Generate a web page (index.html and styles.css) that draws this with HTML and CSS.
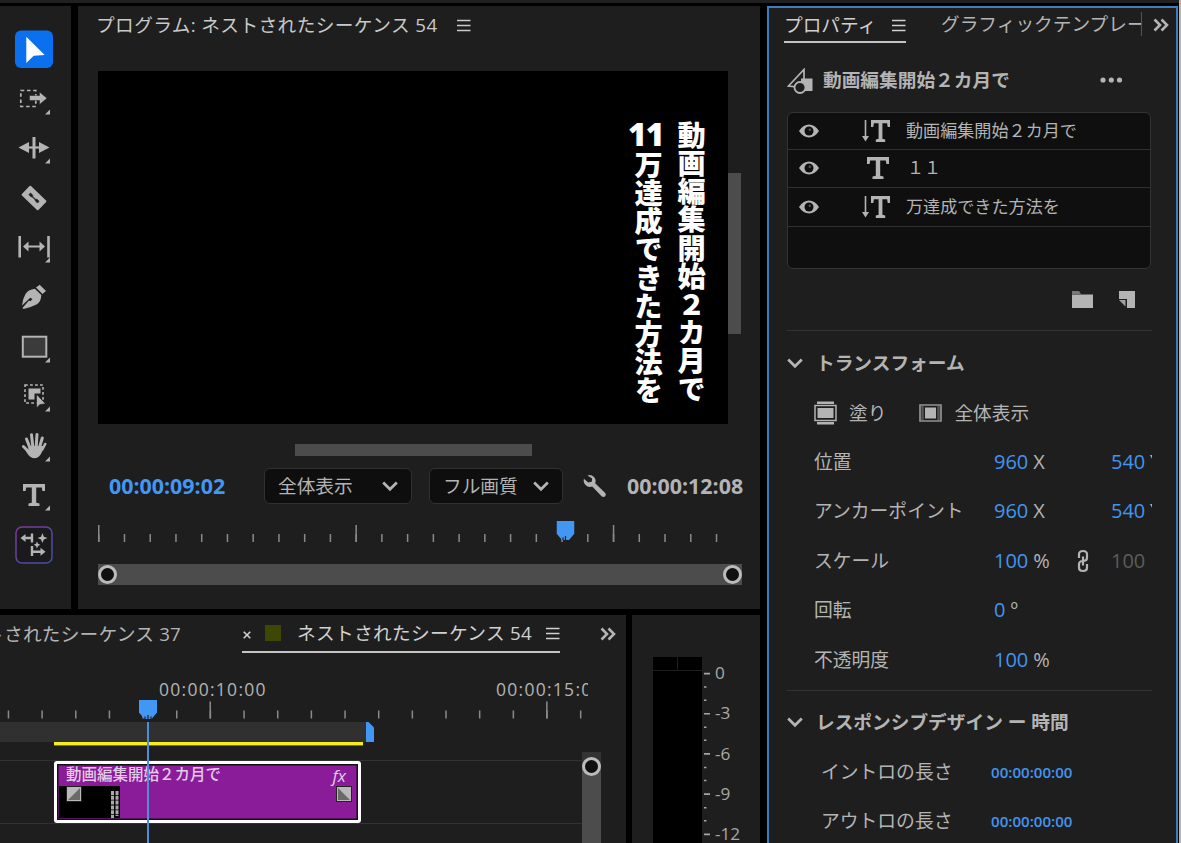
FILE: index.html
```
<!DOCTYPE html>
<html lang="ja">
<head>
    <meta charset="UTF-8">
    <meta name="viewport" content="width=device-width, initial-scale=1.0">
    <title>ネストされたシーケンス 54</title>
    <link rel="stylesheet" href="styles.css">
</head>
<body>
    <!-- Shared icons -->
    <svg class="defs" width="0" height="0">
        <symbol id="menu" viewBox="0 0 14 14"><path d="M0 2.500h13.500M0 7.500h13.500M0 12.500h13.500" stroke="currentColor" stroke-width="1.500"/></symbol>
        <symbol id="more" viewBox="0 0 16 14"><path d="M1.500 1.500 7 7l-5.500 5.500M8.500 1.500 14 7l-5.500 5.500" fill="none" stroke="currentColor" stroke-width="2.600"/></symbol>
        <symbol id="chevron" viewBox="0 0 16 12"><path d="M1.200 2.500 8 9.300l6.800-6.800" fill="none" stroke="currentColor" stroke-width="2.700"/></symbol>
        <symbol id="eye" viewBox="0 0 20 14"><path d="M0 7C3 2.500 6.500.5 10 .5S17 2.500 20 7c-3 4.500-6.500 6.500-10 6.500S3 11.500 0 7z" fill="currentColor"/><circle cx="10" cy="7" r="4.500" fill="#0f0f0f"/><circle cx="10.800" cy="5.800" r="1.200" fill="#555"/></symbol>
        <symbol id="type" viewBox="0 0 22 22"><path d="M0 0h22v7h-2.600l-.6-3.600h-5.600v15.400l3.300.7V22h-11v-2.500l3.300-.7V3.400H3.200L2.600 7H0z" fill="currentColor"/></symbol>
        <symbol id="vtype" viewBox="0 0 28 22"><path d="M3.500 0v17" stroke="currentColor" stroke-width="1.600"/><path d="M0 16h7l-3.500 5.500z" fill="currentColor"/><path d="M9 0h19v7h-2.300l-.6-3.800h-4.700v15.600l2.800.7V22h-9.400v-2.500l2.800-.7V3.200h-4.700L11.300 7H9z" fill="currentColor"/></symbol>
        <symbol id="corner" viewBox="-20 -20 40 40"><path d="M16 10.500v5h-5z" fill="currentColor"/></symbol>
        <symbol id="playhead" viewBox="0 0 18 19"><path d="M0 0h18v12.500L12.500 19h-7L0 12.500z" fill="#4297f5"/></symbol>
    </svg>

    <div class="top-strip"></div>
    <div class="workspace">
        <div class="left-side">
            <div class="upper">
                <!-- Tools -->
                <aside class="panel tools">
                    <svg class="tool" viewBox="-20 -20 40 40"><rect x="-19" y="-18.500" width="38" height="37.500" rx="6" fill="#0a70ee"/><path d="M-7.700-12.200V14l7.400-7.300 11-.7z" fill="#fff"/></svg>
                    <svg class="tool" viewBox="-20 -20 40 40"><rect x="-13.200" y="-8.500" width="15" height="16" fill="none" stroke="currentColor" stroke-width="1.700" stroke-dasharray="3.500 2.700"/><path d="M-4.500-3.500v5H5.500v4L13-.8 5.500-7v3.500z" fill="currentColor" stroke="#1e1e1e" stroke-width=".5"/><use href="#corner" x="-20" y="-20" width="40" height="40"/></svg>
                    <svg class="tool" viewBox="-20 -20 40 40"><path d="M-1.500-11h3v21.500h-3zM-15.500-.5-5-6V5zM15.500-.5 5-6V5z" fill="currentColor"/><path d="M-6-.5H6" stroke="currentColor" stroke-width="2.200"/><use href="#corner" x="-20" y="-20" width="40" height="40"/></svg>
                    <svg class="tool" viewBox="-20 -20 40 40"><g transform="rotate(44)"><rect x="-11.500" y="-6.500" width="23" height="13" rx="1" fill="currentColor"/><path d="M-6-1.200h3l1 1h4l1-1h3v2.400H3L2 .5h-4l-1 .7h-3z" fill="#1e1e1e" stroke="#1e1e1e" stroke-width=".6"/></g></svg>
                    <svg class="tool" viewBox="-20 -20 40 40"><path d="M-14.300-11v21.500M14.500-11v21.500" stroke="currentColor" stroke-width="2.600"/><path d="M-8-.5H8" stroke="currentColor" stroke-width="2"/><path d="M-11-.5l5.500-5v10zM11-.5l-5.500-5v10z" fill="currentColor"/><use href="#corner" x="-20" y="-20" width="40" height="40"/></svg>
                    <svg class="tool" viewBox="-20 -20 40 40"><path d="M5.700-12.300 12-6 8.500-3 2-9.500zM.8-8.300 7.300-2Q7.300 4.500 2.500 7.500-3 10.300-10.500 12l-1-1 6.500-7.500 1.500.8 2-2.300-2.300-1.200L-12 8.500Q-11.500 2-8.500-3-6-7.300.8-8.300z" fill="currentColor"/></svg>
                    <svg class="tool" viewBox="-20 -20 40 40"><rect x="-11.200" y="-10.300" width="23.500" height="20" fill="#3b3b3b" stroke="currentColor" stroke-width="2"/><use href="#corner" x="-20" y="-20" width="40" height="40"/></svg>
                    <svg class="tool" viewBox="-20 -20 40 40"><rect x="-9" y="-11" width="18" height="18" fill="none" stroke="currentColor" stroke-width="1.600" stroke-dasharray="2.800 2.200"/><path d="M-5.500-7.500h12v5h-6v6h-6z" fill="currentColor"/><path d="M2.500-1.800v13.800l3.200-3.300 5.800-1z" fill="currentColor" stroke="#1e1e1e" stroke-width=".7"/><use href="#corner" x="-20" y="-20" width="40" height="40"/></svg>
                    <svg class="tool" viewBox="-20 -20 40 40"><path d="M-7.500-7-4 2M-2.500-11.300-1.200 1M3-11.500 2.200 1M8.300-8 5 3M-10.600.5-5 6" stroke="currentColor" stroke-width="3" stroke-linecap="round"/><path d="M-5.500 0H6.800L10 0l-2.500 7Q5 12.300 0 12.300-4 12-7 7l-2-3.500 3.500 1z" fill="currentColor"/><path d="m8 4 3.200-6" stroke="currentColor" stroke-width="2.600" stroke-linecap="round"/><use href="#corner" x="-20" y="-20" width="40" height="40"/></svg>
                    <svg class="tool" viewBox="-20 -20 40 40"><use href="#type" x="-11" y="-11" width="22" height="22"/><use href="#corner" x="-20" y="-20" width="40" height="40"/></svg>
                    <svg class="tool" viewBox="-20 -20 40 40">
                        <linearGradient id="ring" x1="0" y1="0" x2="1" y2="1"><stop offset="0" stop-color="#813797"/><stop offset="1" stop-color="#3b53a8"/></linearGradient>
                        <rect x="-18" y="-18" width="36" height="36" rx="6" fill="#1a1a1c" stroke="url(#ring)" stroke-width="1.500"/>
                        <path d="M-2-11.500v9M-2 1v10M-10-7h8M-2 6.800H8" stroke="currentColor" stroke-width="2.400"/><path d="m-13.500-7 5-4v8zM11.500 6.800l-5-4v8zM8.500-12l1.300 3.700L13.500-7 9.800-5.500 8.500-2 7-5.500 3.500-7 7-8.300zM3-3.500l1 2.300 2.300 1L4 1 3 3.500 2 1-.3-.2l2.300-1z" fill="currentColor"/>
                    </svg>
                </aside>

                <!-- Program monitor -->
                <main class="panel program">
                    <div class="program-title"><span>プログラム: ネストされたシーケンス 54</span><svg class="menu-icon"><use href="#menu"/></svg></div>
                    <div class="monitor">
                        <div class="video">
                            <span class="caption caption-right">動画編集開始２カ月で</span>
                            <span class="caption-number">11</span>
                            <span class="caption caption-left">万達成できた方法を</span>
                        </div>
                        <div class="v-scroll"></div>
                    </div>
                    <div class="h-scroll"></div>
                    <div class="controls">
                        <span class="timecode current">00:00:09:02</span>
                        <div class="select select-fit">全体表示<svg class="chevron"><use href="#chevron"/></svg></div>
                        <div class="select select-quality">フル画質<svg class="chevron"><use href="#chevron"/></svg></div>
                        <svg class="wrench" viewBox="0 0 24 24"><path d="M4.500 1.500Q8 0 11 3q2.500 3 1.200 6.200l10 9.800q1.300 1.800 0 3.200t-3.300.3L9.200 12.500Q5.500 13.800 2.500 11 0 8.300.9 4.800l4.300 3.700 3.500-.7.500-3.300z" fill="currentColor"/></svg>
                        <span class="timecode">00:00:12:08</span>
                    </div>
                    <div class="scrub">
                        <svg width="643" height="22"><path d="M0 17h630" stroke="#8a8a8a" stroke-width="8" stroke-dasharray="1.500 24.240"/><path d="M0 12.500h530" stroke="#8a8a8a" stroke-width="17" stroke-dasharray="1.500 255.900"/><use href="#playhead" x="458.500" y="0" width="18" height="19"/><path d="M465 19v-2.500M467.500 19v-4" stroke="#1e1e1e" stroke-width="1.200"/></svg>
                    </div>
                    <div class="zoom-bar"><i class="knob"></i><i class="knob"></i></div>
                </main>
            </div>

            <div class="lower">
                <!-- Timeline -->
                <section class="panel timeline">
                    <div class="seq-tabs">
                        <div class="seq-tab-off"><span>ネストされたシーケンス 37</span></div>
                        <div class="seq-tab">
                            <svg class="close" viewBox="0 0 8 8"><path d="m.7.7 6.600 6.600m0-6.600L.7 7.300" stroke="currentColor" stroke-width="1.600"/></svg>
                            <i class="label-color"></i>
                            <span>ネストされたシーケンス 54</span>
                            <svg class="menu-icon"><use href="#menu"/></svg>
                        </div>
                        <svg class="more"><use href="#more"/></svg>
                    </div>
                    <div class="ruler">
                        <div class="ruler-labels"><span>00:00:10:00</span><span>00:00:15:00</span></div>
                        <svg width="588" height="20"><path d="M7.700 13.500H588" stroke="#8a8a8a" stroke-width="8" stroke-dasharray="1.500 32.160"/><path d="M209.500 9H588" stroke="#8a8a8a" stroke-width="17" stroke-dasharray="1.500 335.100"/></svg>
                    </div>
                    <div class="work-area"><svg width="8" height="20"><path d="M0 0h2.500L8 5.500V20H0z" fill="#4297f5"/></svg></div>
                    <div class="render-bar"></div>
                    <div class="track">
                        <div class="clip">
                            <div class="clip-name"><span>動画編集開始２カ月で</span><em>fx</em></div>
                            <div class="thumb"><svg width="62" height="32"><path d="M53.500 5v27M58 5v25" stroke="#aaa" stroke-width="3" stroke-dasharray="4 .8"/></svg></div>
                            <svg class="fade fade-in" viewBox="0 0 14 14"><path d="M0 0h14v14H0z" fill="#b9b9b9"/><path d="M13 1v12H1z" fill="#696969"/></svg>
                            <svg class="fade fade-out" viewBox="0 0 14 14"><path d="M0 0h14v14H0z" fill="#b9b9b9"/><path d="M1 1v12h12z" fill="#696969"/></svg>
                        </div>
                    </div>
                    <div class="cursor"><svg width="18" height="19"><use href="#playhead"/><path d="M6 19v-2.500M9 19v-4M12 19v-2.500" stroke="#1e1e1e" stroke-width="1.200"/></svg></div>
                    <div class="track-scroll"><i class="knob"></i></div>
                </section>

                <!-- Audio meter -->
                <section class="panel meter">
                    <div class="bars"><i></i><i></i><i class="level"></i></div>
                    <svg class="scale" width="8" height="200"><path d="M4 15.700v180" stroke="#a5a5a5" stroke-width="6" stroke-dasharray="1.700 38.500"/><path d="M2.200 29.300v160" stroke="#a5a5a5" stroke-width="2.500" stroke-dasharray="1.500 11.600 1.500 25.600"/></svg>
                    <div class="db"><span>0</span><span>-3</span><span>-6</span><span>-9</span><span>-12</span></div>
                </section>
            </div>
        </div>

        <!-- Properties -->
        <aside class="panel properties">
            <div class="prop-tabs">
                <div class="prop-tab"><span>プロパティ</span><svg class="menu-icon"><use href="#menu"/></svg></div>
                <div class="prop-tab-off">グラフィックテンプレート</div>
                <svg class="more"><use href="#more"/></svg>
            </div>
            <div class="item-title">
                <svg class="shape-icon" width="26" height="27" viewBox="0 0 26 27"><path d="M1.500 18 17 1.500v18z" fill="none" stroke="currentColor" stroke-width="1.700"/><path d="M14 10.500h11.500V23H14z" fill="currentColor"/><circle cx="13" cy="19.500" r="5.500" fill="#1e1e1e" stroke="currentColor" stroke-width="1.800"/></svg>
                <h2>動画編集開始２カ月で</h2>
                <svg class="dots" width="24" height="6"><circle cx="3" cy="3" r="2.600" fill="currentColor"/><circle cx="11.300" cy="3" r="2.600" fill="currentColor"/><circle cx="19.500" cy="3" r="2.600" fill="currentColor"/></svg>
            </div>
            <div class="layers">
                <div class="layer"><svg class="eye"><use href="#eye"/></svg><svg class="vtype"><use href="#vtype"/></svg><span>動画編集開始２カ月で</span></div>
                <div class="layer"><svg class="eye"><use href="#eye"/></svg><svg class="type"><use href="#type"/></svg><span>１１</span></div>
                <div class="layer"><svg class="eye"><use href="#eye"/></svg><svg class="vtype"><use href="#vtype"/></svg><span>万達成できた方法を</span></div>
            </div>
            <div class="layer-actions">
                <svg width="21" height="17"><path d="M0 0h7l2 3H0z" fill="#777"/><path d="M0 3.500h21V17H0z" fill="currentColor"/></svg>
                <svg width="16" height="17"><path d="M0 0h16v17H8V8H0z" fill="currentColor"/><path d="M0 9h6.500v6.500z" fill="#a0a0a0"/></svg>
            </div>
            <div class="section transform">
                <h3><svg class="chevron"><use href="#chevron"/></svg>トランスフォーム</h3>
                <div class="fit-row">
                    <svg width="23" height="24"><path d="M3 1.700h17M3 22.300h17" stroke="currentColor" stroke-width="2.400"/><path d="M1 4.500h21v15H1z" fill="none" stroke="currentColor" stroke-width="1.500"/><path d="M3.500 7h16v10h-16z" fill="currentColor"/></svg>
                    <span>塗り</span>
                    <svg width="23" height="18"><path d="M1 1h21v16H1z" fill="none" stroke="#929292" stroke-width="1.700"/><path d="M3.500 2v14M19.500 2v14" stroke="#555" stroke-width="2.500"/><path d="M6 3.500h11v11H6z" fill="currentColor"/></svg>
                    <span>全体表示</span>
                </div>
                <div class="prop"><label>位置</label><b>960</b><span>X</span><b class="second">540</b><span>Y</span></div>
                <div class="prop"><label>アンカーポイント</label><b>960</b><span>X</span><b class="second">540</b><span>Y</span></div>
                <div class="prop"><label>スケール</label><b>100</b><span>%</span><svg class="link" viewBox="0 0 12 24"><path d="M2 9V5.500Q2 2 6 2t4 3.500v3Q10 12 6 12M10 15v3.500Q10 22 6 22t-4-3.500v-3Q2 12 6 12M6 7.500v9" fill="none" stroke="currentColor" stroke-width="2.200"/></svg><b class="second off">100</b></div>
                <div class="prop"><label>回転</label><b>0</b><span>º</span></div>
                <div class="prop"><label>不透明度</label><b>100</b><span>%</span></div>
            </div>
            <div class="section responsive">
                <h3><svg class="chevron"><use href="#chevron"/></svg>レスポンシブデザイン ー 時間</h3>
                <div class="prop time"><label>イントロの長さ</label><b>00:00:00:00</b></div>
                <div class="prop time"><label>アウトロの長さ</label><b>00:00:00:00</b></div>
            </div>
        </aside>
        <div class="window-edge"></div>
    </div>
</body>
</html>
```
FILE: styles.css
```
/* General Reset */
* {
    box-sizing: border-box;
}

body {
    margin: 0;
    width: 1181px;
    height: 843px;
    overflow: hidden;
    background-color: #000;
    color: #b4b4b4;
    font-family: "Open Sans", "Noto Sans CJK JP", sans-serif;
    font-size: 18.7px;
    line-height: 28px;
    white-space: nowrap;
}

h2, h3 {
    margin: 0;
    font-size: 18.7px;
    font-weight: 700;
}

svg {
    display: block;
    flex: none;
}

.defs {
    position: absolute;
}

.top-strip {
    height: 3px;
    background-color: #202020;
}

.workspace {
    display: flex;
    height: 840px;
    padding-top: 3px;
}

.panel {
    background-color: #1e1e1e;
    flex: none;
    overflow: hidden;
}

.left-side {
    display: flex;
    flex-direction: column;
    gap: 6px;
    width: 760px;
    margin-right: 7px;
}

.upper {
    display: flex;
    flex: none;
    gap: 7px;
    height: 603px;
}

.lower {
    display: flex;
    gap: 6px;
    height: 228px;
}

/* Common icons */
.menu-icon {
    width: 14px;
    height: 14px;
}

.more {
    width: 16px;
    height: 14px;
}

.chevron {
    width: 16px;
    height: 12px;
}

.knob {
    display: block;
    width: 19px;
    height: 19px;
    border: 3px solid #bcbcbc;
    border-radius: 50%;
    background-color: #101010;
}

/* Tools */
.tools {
    width: 71px;
    padding: 18.5px 0 0 14px;
    display: grid;
    grid-auto-rows: 49.55px;
    align-content: start;
    align-items: center;
}

.tool {
    width: 40px;
    height: 40px;
}

/* Program monitor */
.program {
    width: 682px;
    padding-left: 20px;
}

.program-title {
    display: flex;
    align-items: center;
    gap: 20px;
    height: 37px;
    margin-left: -2px;
    color: #c9c9c9;
    letter-spacing: 0.38px;
}

.monitor {
    display: flex;
    margin-top: 28px;
}

.video {
    position: relative;
    width: 630px;
    height: 353px;
    background-color: #000;
    color: #fff;
}

.caption {
    position: absolute;
    writing-mode: vertical-rl;
    font-family: "Noto Sans CJK JP", sans-serif;
    font-weight: 900;
    font-size: 28.2px;
    line-height: 30px;
}

.caption-right {
    left: 578px;
    top: 50px;
}

.caption-left {
    left: 535px;
    top: 80px;
}

.caption-number {
    position: absolute;
    left: 530px;
    top: 47px;
    font-weight: 800;
    font-size: 32px;
    line-height: 32px;
    letter-spacing: -1px;
}

.v-scroll {
    width: 13px;
    height: 161px;
    margin-top: 102px;
    background-color: #4c4c4c;
}

.h-scroll {
    width: 237px;
    height: 12px;
    margin: 20px 0 0 197px;
    background-color: #4c4c4c;
}

.controls {
    display: flex;
    align-items: center;
    margin-top: 11px;
    height: 37px;
}

.timecode {
    font-size: 21.4px;
    font-weight: 700;
    width: 119px;
    margin-left: 20px;
}

.timecode.current {
    color: #4297f5;
    margin-left: 11px;
}

.select {
    display: flex;
    align-items: center;
    justify-content: space-between;
    height: 36px;
    padding: 0 13px;
    border: 1.5px solid #303030;
    border-radius: 6px;
    background-color: #0e0e0e;
}

.select-fit {
    width: 148px;
    margin-left: 36px;
}

.select-quality {
    width: 134px;
    margin-left: 17px;
}

.wrench {
    width: 24px;
    height: 24px;
    margin-left: 20px;
}

.scrub {
    height: 22px;
    margin-top: 17px;
}

.zoom-bar {
    display: flex;
    align-items: center;
    justify-content: space-between;
    width: 644px;
    height: 21px;
    margin-top: 21px;
    background-color: #4c4c4c;
}

/* Timeline */
.timeline {
    position: relative;
    width: 626px;
}

.seq-tabs {
    display: flex;
    height: 38px;
}

.seq-tab-off {
    display: flex;
    justify-content: flex-end;
    align-items: center;
    width: 181px;
    overflow: hidden;
    letter-spacing: 0.2px;
}

.seq-tab {
    display: flex;
    align-items: center;
    width: 318px;
    margin-left: 61px;
    border-bottom: 2px solid #c4c4c4;
    color: #d0d0d0;
    letter-spacing: 0.3px;
}

.close {
    width: 8px;
    height: 8px;
    margin: 3px 14px 0 1px;
}

.label-color {
    width: 16px;
    height: 16px;
    margin-right: 16px;
    background-color: #3e4804;
}

.seq-tab .menu-icon {
    margin-left: auto;
}

.seq-tabs .more {
    margin: 12px 0 0 40px;
}

.ruler {
    width: 588px;
    height: 69px;
    padding-top: 24px;
    overflow: hidden;
}

.ruler-labels {
    display: flex;
    gap: 230px;
    padding-left: 159px;
    height: 24px;
    line-height: 24px;
    font-size: 17.5px;
    letter-spacing: 1.27px;
}

.ruler-labels span {
    flex: none;
    width: 107px;
}

.work-area {
    width: 366px;
    height: 20px;
    padding-left: 366px;
    background-color: #303030;
}

.render-bar {
    width: 309px;
    height: 4px;
    margin: 0 0 14px 54px;
    background-color: #f3ee1c;
    border-bottom: 1px solid #77750c;
}

.track {
    width: 582px;
    height: 64px;
    padding-left: 54px;
    border-top: 1px solid #323232;
    border-bottom: 1px solid #323232;
}

.clip {
    position: relative;
    width: 307px;
    height: 62px;
    padding: 2px;
    border: 3px solid #fff;
    border-radius: 3px;
    background-color: #8a1c9a;
    box-shadow: inset 0 0 0 1.5px #111;
}

.clip-name {
    display: flex;
    justify-content: space-between;
    height: 20px;
    padding: 0 10px 0 7px;
    font-size: 15.5px;
    font-weight: 500;
    line-height: 17px;
    color: #e2cde6;
}

.clip-name em {
    font-size: 17px;
    line-height: 19px;
}

.thumb {
    width: 61px;
    height: 32px;
    background-color: #000;
}

.fade {
    position: absolute;
    top: 23px;
    width: 14px;
    height: 14px;
    outline: 1px solid #222;
}

.fade-in {
    left: 10px;
}

.fade-out {
    right: 7px;
}

.cursor {
    position: absolute;
    left: 139px;
    top: 85px;
    width: 18px;
    height: 160px;
}

.cursor::after {
    content: "";
    position: absolute;
    left: 8px;
    top: 22px;
    width: 2px;
    height: 140px;
    background-color: #4c8ed8;
}

.track-scroll {
    position: absolute;
    left: 582px;
    top: 137px;
    width: 19px;
    height: 100px;
    padding-top: 5px;
    background: linear-gradient(#333 14px, #4c4c4c 14px);
}

/* Audio meter */
.meter {
    display: flex;
    width: 128px;
    padding: 42px 0 0 21px;
}

.bars {
    display: grid;
    grid-template-columns: 24px 24px;
    grid-template-rows: 13px 200px;
    gap: 1px;
    width: 49px;
}

.bars i {
    background-color: #000;
}

.bars .level {
    grid-column: span 2;
}

.scale {
    margin-left: 1px;
}

.db {
    display: grid;
    grid-auto-rows: 40.25px;
    align-content: start;
    align-items: center;
    margin: -4px 0 0 4px;
    font-size: 17.2px;
    color: #a8a8a8;
}

/* Properties */
.properties {
    width: 411px;
    height: 850px;
    border: 2px solid #417bc0;
    padding-left: 18px;
}

.prop-tabs {
    display: flex;
    margin-left: -3px;
    height: 35px;
}

.prop-tab {
    display: flex;
    align-items: center;
    justify-content: space-between;
    width: 122px;
    border-bottom: 2px solid #c4c4c4;
    color: #d0d0d0;
}

.prop-tab-off {
    width: 201px;
    height: 24px;
    margin: 4px 11px 0 35px;
    line-height: 24px;
    border-right: 1px solid #555;
    overflow: hidden;
}

.prop-tabs .more {
    margin-top: 10px;
}

.item-title {
    display: flex;
    align-items: center;
    height: 30px;
    margin-top: 22px;
}

.shape-icon {
    margin: 3px 10px 0 0;
}

.dots {
    margin-left: 90px;
}

.layers {
    width: 364px;
    height: 157px;
    margin-top: 17px;
    border: 1px solid #343434;
    border-radius: 6px;
    background-color: #0f0f0f;
}

.layer {
    display: flex;
    align-items: center;
    height: 38.6px;
    padding-left: 11px;
    border-bottom: 1.5px solid #303030;
    font-size: 17.1px;
}

.layer:first-child {
    height: 36.5px;
}

.eye {
    width: 20px;
    height: 14px;
}

.vtype {
    width: 28px;
    height: 22px;
    margin: 0 16px 0 43px;
}

.type {
    width: 22px;
    height: 22px;
    margin: 0 18px 0 48px;
}

.layer-actions {
    display: flex;
    justify-content: flex-end;
    gap: 26px;
    width: 348px;
    height: 61px;
    padding-top: 22px;
}

.section {
    width: 365px;
    border-top: 1.5px solid #333;
    overflow: hidden;
}

.section h3 {
    display: flex;
    align-items: center;
    gap: 13px;
    height: 49px;
    margin-top: 7px;
}

.transform {
    height: 360px;
}

.fit-row {
    display: flex;
    align-items: center;
    height: 50px;
    padding: 1px 0 0 27px;
}

.fit-row span {
    margin: 0 33px 0 12px;
}

.prop {
    display: flex;
    align-items: center;
    height: 49.5px;
    padding-left: 27px;
    font-size: 20px;
    position: relative;
}

.prop label {
    width: 180px;
    font-size: 18.8px;
}

.prop b {
    font-weight: 400;
    color: #4394ee;
    margin-right: 5px;
}

.prop .second {
    position: absolute;
    left: 324px;
}

.prop .second + span {
    position: absolute;
    left: 363px;
}

.prop .off {
    color: #5c5c5c;
}

.link {
    width: 12px;
    height: 24px;
    margin-left: 27px;
}

.responsive h3 {
    height: 50px;
    margin-top: 6px;
}

.time {
    padding-left: 34px;
}

.time label {
    width: 170px;
}

.time b {
    font-size: 15.1px;
    font-weight: 600;
}

/* Right window edge */
.window-edge {
    width: 2px;
    height: 843px;
    margin: -6px 0 0 1px;
    background-color: #b5b5b5;
}
```
